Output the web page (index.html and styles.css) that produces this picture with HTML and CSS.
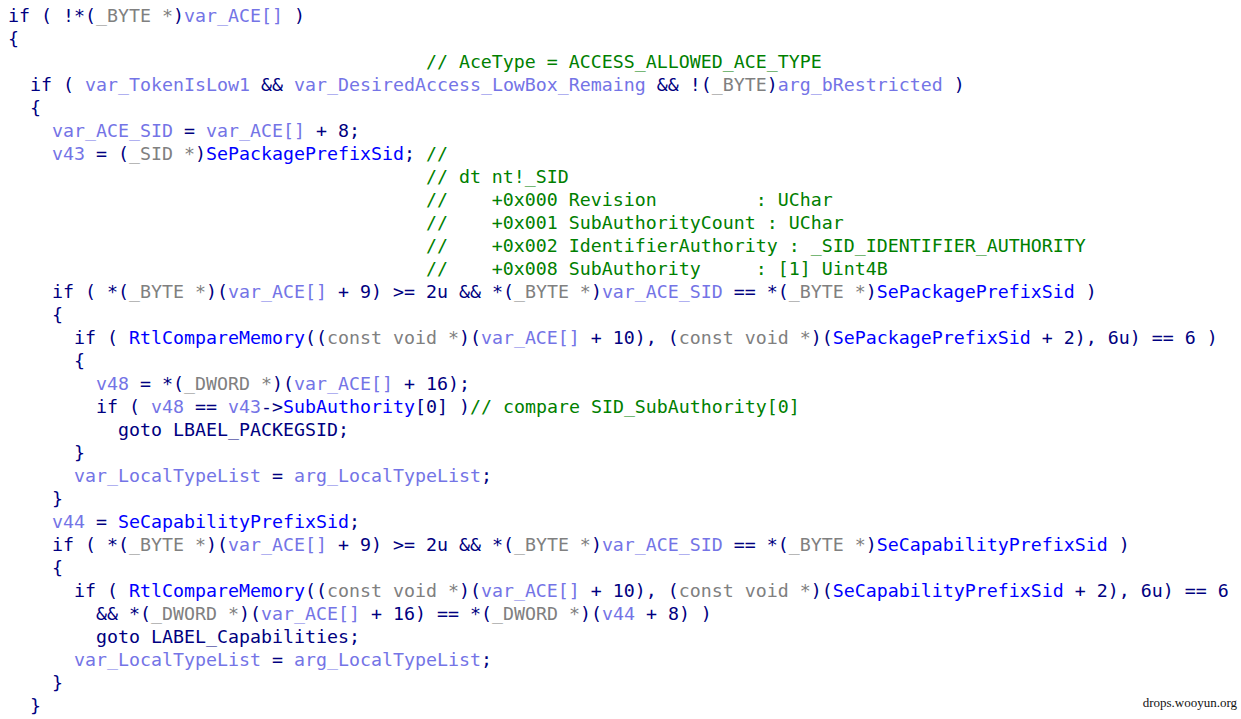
FILE: index.html
```html
<!DOCTYPE html>
<html>
<head>
<meta charset="utf-8">
<link rel="stylesheet" href="styles.css">
</head>
<body>
<pre class="code">if ( !*(<span class="t">_BYTE *</span>)<span class="v">var_ACE[]</span> )
{
                                      <span class="c">// AceType = ACCESS_ALLOWED_ACE_TYPE</span>
  if ( <span class="v">var_TokenIsLow1</span> &amp;&amp; <span class="v">var_DesiredAccess_LowBox_Remaing</span> &amp;&amp; !(<span class="t">_BYTE</span>)<span class="v">arg_bRestricted</span> )
  {
    <span class="v">var_ACE_SID</span> = <span class="v">var_ACE[]</span> + 8;
    <span class="v">v43</span> = (<span class="t">_SID *</span>)<span class="g">SePackagePrefixSid</span>; <span class="c">//</span>
                                      <span class="c">// dt nt!_SID</span>
                                      <span class="c">//    +0x000 Revision         : UChar</span>
                                      <span class="c">//    +0x001 SubAuthorityCount : UChar</span>
                                      <span class="c">//    +0x002 IdentifierAuthority : _SID_IDENTIFIER_AUTHORITY</span>
                                      <span class="c">//    +0x008 SubAuthority     : [1] Uint4B</span>
    if ( *(<span class="t">_BYTE *</span>)(<span class="v">var_ACE[]</span> + 9) &gt;= 2u &amp;&amp; *(<span class="t">_BYTE *</span>)<span class="v">var_ACE_SID</span> == *(<span class="t">_BYTE *</span>)<span class="g">SePackagePrefixSid</span> )
    {
      if ( <span class="g">RtlCompareMemory</span>((<span class="t">const void *</span>)(<span class="v">var_ACE[]</span> + 10), (<span class="t">const void *</span>)(<span class="g">SePackagePrefixSid</span> + 2), 6u) == 6 )
      {
        <span class="v">v48</span> = *(<span class="t">_DWORD *</span>)(<span class="v">var_ACE[]</span> + 16);
        if ( <span class="v">v48</span> == <span class="v">v43</span>-&gt;<span class="g">SubAuthority</span>[0] )<span class="c">// compare SID_SubAuthority[0]</span>
          goto LBAEL_PACKEGSID;
      }
      <span class="v">var_LocalTypeList</span> = <span class="v">arg_LocalTypeList</span>;
    }
    <span class="v">v44</span> = <span class="g">SeCapabilityPrefixSid</span>;
    if ( *(<span class="t">_BYTE *</span>)(<span class="v">var_ACE[]</span> + 9) &gt;= 2u &amp;&amp; *(<span class="t">_BYTE *</span>)<span class="v">var_ACE_SID</span> == *(<span class="t">_BYTE *</span>)<span class="g">SeCapabilityPrefixSid</span> )
    {
      if ( <span class="g">RtlCompareMemory</span>((<span class="t">const void *</span>)(<span class="v">var_ACE[]</span> + 10), (<span class="t">const void *</span>)(<span class="g">SeCapabilityPrefixSid</span> + 2), 6u) == 6
        &amp;&amp; *(<span class="t">_DWORD *</span>)(<span class="v">var_ACE[]</span> + 16) == *(<span class="t">_DWORD *</span>)(<span class="v">v44</span> + 8) )
        goto LABEL_Capabilities;
      <span class="v">var_LocalTypeList</span> = <span class="v">arg_LocalTypeList</span>;
    }
  }</pre>
<div class="mark">drops.wooyun.org</div>
</body>
</html>
```

FILE: styles.css
```css
html, body {
  margin: 0;
  padding: 0;
  background: #ffffff;
  width: 1241px;
  height: 719px;
  overflow: hidden;
}
body {
  position: relative;
}
.code {
  margin: 0;
  padding: 4px 0 0 8px;
  font-family: "DejaVu Sans Mono", "Liberation Mono", monospace;
  font-size: 18.27px;
  line-height: 23px;
  color: #000080;
  white-space: pre;
  overflow: hidden;
}
.v { color: #7474e6; }
.t { color: #808080; }
.g { color: #0000ff; }
.c { color: #008000; }
.mark {
  position: absolute;
  right: 4px;
  bottom: 8px;
  font-family: "Liberation Serif", "Times New Roman", serif;
  font-size: 13px;
  color: #111111;
}
```
